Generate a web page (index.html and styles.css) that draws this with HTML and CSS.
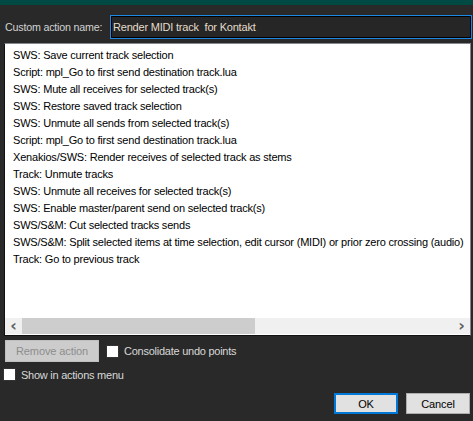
FILE: index.html
```html
<!DOCTYPE html>
<html lang="en">
<head>
  <meta charset="UTF-8">
  <title>Custom action</title>
  <link rel="stylesheet" href="styles.css">
</head>
<body>
  <div class="titlebar"></div>

  <div class="dialog">
    <!-- name row -->
    <div class="name-row">
      <label for="action-name">Custom action name:</label>
      <input id="action-name" class="name-input" type="text" value="Render MIDI track  for Kontakt">
    </div>

    <!-- action list -->
    <div class="listbox">
      <ul class="actions">
        <li>SWS: Save current track selection</li>
        <li>Script: mpl_Go to first send destination track.lua</li>
        <li>SWS: Mute all receives for selected track(s)</li>
        <li>SWS: Restore saved track selection</li>
        <li>SWS: Unmute all sends from selected track(s)</li>
        <li>Script: mpl_Go to first send destination track.lua</li>
        <li>Xenakios/SWS: Render receives of selected track as stems</li>
        <li>Track: Unmute tracks</li>
        <li>SWS: Unmute all receives for selected track(s)</li>
        <li>SWS: Enable master/parent send on selected track(s)</li>
        <li>SWS/S&amp;M: Cut selected tracks sends</li>
        <li>SWS/S&amp;M: Split selected items at time selection, edit cursor (MIDI) or prior zero crossing (audio)</li>
        <li>Track: Go to previous track</li>
      </ul>
      <div class="hscroll">
        <span class="arrow">&lsaquo;</span>
        <div class="track"><div class="thumb"></div></div>
        <span class="arrow">&rsaquo;</span>
      </div>
    </div>

    <div class="option-row">
      <button class="btn" disabled>Remove action</button>
      <label class="check"><span class="box"></span>Consolidate undo points</label>
    </div>

    <label class="check menu-check"><span class="box"></span>Show in actions menu</label>

    <div class="footer">
      <button class="btn default">OK</button>
      <button class="btn">Cancel</button>
    </div>
  </div>
</body>
</html>
```

FILE: styles.css
```css
html, body {
  margin: 0;
  padding: 0;
  height: 100%;
  overflow: hidden;
}

body {
  background: #292929;
  font-family: "Liberation Sans", Arial, sans-serif;
  font-size: 11px;
  color: #d6d6d6;
}

.titlebar {
  height: 5px;
  background: #014943;
}

.dialog {
  display: flex;
  flex-direction: column;
  padding: 0 2px 0 4px;
}

/* name row */
.name-row {
  display: flex;
  align-items: center;
  margin-top: 11px;
  height: 22px;
}

.name-row label {
  width: 106px;
  padding-left: 1px;
  white-space: nowrap;
  font-size: 10.7px;
  letter-spacing: -0.2px;
  color: #d2d2d2;
}

.name-input {
  flex: 1;
  height: 22px;
  box-sizing: border-box;
  margin: 0;
  padding: 0 1px;
  border: 1px solid #000;
  outline: 1px solid #1e88e5;
  background: #262626;
  color: #e4dccb;
  font: inherit;
  font-size: 11px;
  letter-spacing: -0.2px;
}

/* list */
.listbox {
  margin-top: 5px;
  height: 293px;
  box-sizing: border-box;
  border: 1px solid #828790;
  border-left-color: #111;
  border-bottom-color: #111;
  background: #fff;
  display: flex;
  flex-direction: column;
}

.actions {
  flex: 1;
  list-style: none;
  margin: 0;
  padding: 3px 0 0 8px;
  white-space: nowrap;
  overflow: hidden;
  color: #000;
  font-size: 11px;
  letter-spacing: -0.2px;
}

.actions li {
  height: 17px;
  line-height: 17px;
}

.hscroll {
  height: 16px;
  display: flex;
  align-items: center;
  background: #f0f0f0;
  margin-bottom: 1px;
}

.hscroll .arrow {
  width: 17px;
  text-align: center;
  color: #606060;
  font-family: "DejaVu Sans", sans-serif;
  font-size: 16px;
  font-weight: bold;
  line-height: 16px;
}

.hscroll .track {
  flex: 1;
  height: 16px;
}

.thumb {
  width: 233px;
  height: 16px;
  background: #cdcdcd;
}

/* buttons and checkboxes */
.btn {
  height: 22px;
  box-sizing: border-box;
  margin: 0;
  padding: 0;
  border: 1px solid #adadad;
  background: #e1e1e1;
  color: #000;
  font: inherit;
  font-size: 11px;
  letter-spacing: -0.1px;
}

.btn:disabled {
  color: #8d8d8d;
  background: #cccccc;
  border-color: #bfbfbf;
}

.btn.default {
  border: 2px solid #0078d7;
}

.option-row {
  display: flex;
  align-items: center;
  margin-top: 4px;
  gap: 7px;
}

.option-row .btn {
  width: 94px;
  margin-left: 1px;
}

.check {
  display: flex;
  align-items: center;
  gap: 5px;
  font-size: 11px;
  letter-spacing: -0.25px;
  color: #d8d8d8;
}

.check .box {
  width: 11px;
  height: 11px;
  background: #fff;
  border: 1px solid #333;
}

.menu-check {
  margin-top: 6px;
  margin-left: -1px;
}

.footer {
  display: flex;
  justify-content: flex-end;
  gap: 8px;
  margin-top: 12px;
  padding-right: 1px;
}

.footer .btn {
  width: 64px;
  height: 21px;
}
```
